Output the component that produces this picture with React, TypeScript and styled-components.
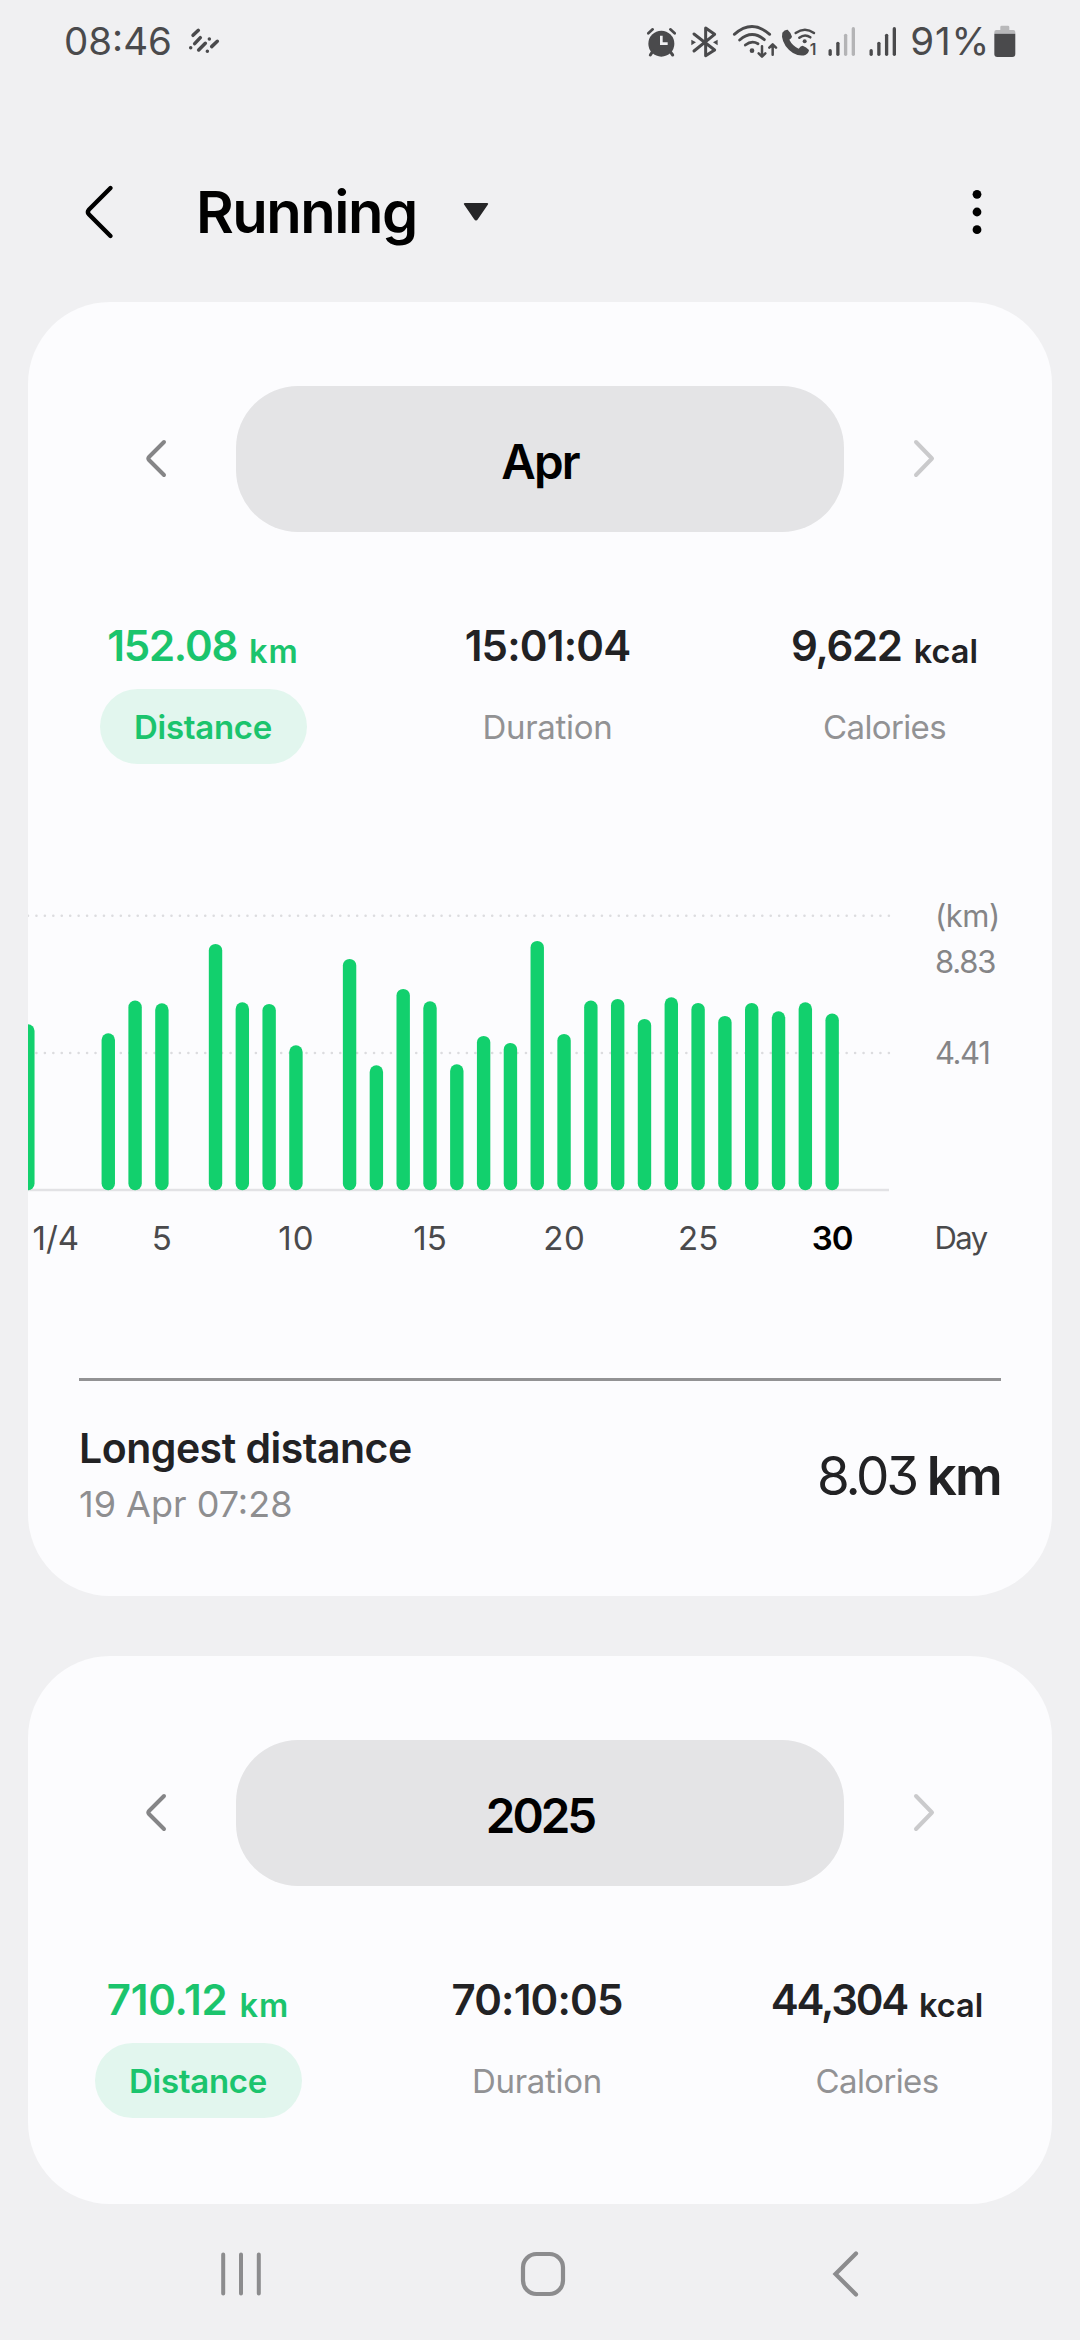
import React from 'react';
import styled, { createGlobalStyle } from 'styled-components';

const ink = '#4a4a4c';
const green = '#1bc46d';

const GlobalStyle = createGlobalStyle`
  * { box-sizing: border-box; }
  body {
    margin: 0;
    background: #f0f0f2;
    font-family: Inter, Roboto, "Liberation Sans", sans-serif;
    color: #000;
  }
`;

const Screen = styled.div`
  display: flex;
  flex-direction: column;
  width: 1080px;
  height: 2340px;
  overflow: hidden;
  background: #f0f0f2;
`;

/* ---------- status bar ---------- */

const StatusBar = styled.div`
  display: flex;
  align-items: center;
  height: 82px;
  padding: 0 64px;
  color: ${ink};
`;

const Clock = styled.span`
  width: 124px;
  font-size: 38.5px;
  line-height: 82px;
  white-space: nowrap;
`;

const StatusIcons = styled.div`
  display: flex;
  align-items: center;
  margin-left: auto;
`;

const StatusGlyph = styled.svg<{ $gap?: number }>`
  display: block;
  flex: none;
  height: 34px;
  margin-left: ${p => p.$gap ?? 0}px;
`;

const BatteryLevel = styled.span`
  width: 82.4px;
  margin-left: 13px;
  font-size: 38.5px;
  line-height: 82px;
  letter-spacing: 0.8px;
  white-space: nowrap;
`;

function SignalBars({ left, strong, gap }: { left: number; strong: boolean; gap: number }) {
  const tops = [152, 130, 106, 86];
  return (
    <StatusGlyph $gap={gap} width={29.3} viewBox={`${left} 72 88 102`}>
      {tops.map((top, i) => (
        <path
          key={top}
          d={`M${left + 9.5 + i * 23.2} ${top}V163`}
          stroke={strong || i < 2 ? ink : '#b4b4b6'}
          strokeWidth="10"
          strokeLinecap="round"
        />
      ))}
    </StatusGlyph>
  );
}

function Status() {
  return (
    <StatusBar>
      <Clock>08:46</Clock>
      <svg width="32" height="27.3" viewBox="24 22 96 82" stroke={ink} strokeWidth="10.5" strokeLinecap="round">
        <path d="M39 47L55 32M44 72L61 54M56 91L76 71M95 81L112 65M32 84h.1M88 58h.1M82 95h.1" />
      </svg>
      <StatusIcons>
        <StatusGlyph width={30.7} viewBox="78 72 92 102">
          <circle cx="124" cy="131" r="39" fill={ink} />
          <path d="M124 107V131H143" fill="none" stroke="#f0f0f2" strokeWidth="8" />
          <path d="M85 100L98 88M151 88L164 100" stroke={ink} strokeWidth="8" strokeLinecap="round" />
          <path d="M98 154L91 165M150 154L158 165" stroke={ink} strokeWidth="9" strokeLinecap="round" />
        </StatusGlyph>
        <StatusGlyph $gap={14} width={29.3} viewBox="212 72 88 102">
          <path
            d="M224 102L286 150L259 167V84L286 103L224 153"
            fill="none"
            stroke={ink}
            strokeWidth="9"
            strokeLinecap="round"
            strokeLinejoin="round"
          />
          <path d="M216 119L230 127L216 136ZM295 119L281 127L295 136Z" fill={ink} />
        </StatusGlyph>
        <StatusGlyph $gap={12} width={46} viewBox="336 72 138 102">
          <g fill="none" stroke={ink} strokeWidth="8.5" strokeLinecap="round">
            <path d="M343 103Q396 56 449 103" />
            <path d="M359 120Q396 88 433 119" />
            <path d="M376 135Q395 120 414 131" />
          </g>
          <circle cx="396" cy="152" r="7" fill={ink} />
          <path
            d="M426 139V169M416 160L426 170L436 160M458 164V134M448 143L458 133L468 143"
            fill="none"
            stroke={ink}
            strokeWidth="7.5"
            strokeLinecap="round"
            strokeLinejoin="round"
          />
        </StatusGlyph>
        <StatusGlyph $gap={3.3} width={38} viewBox="484 72 114 102">
          <path
            d="M488 98Q495 88 504 89Q515 99 517 110Q516 115 509 119Q518 137 537 146Q543 137 549 137Q560 141 568 150Q567 160 557 165Q540 170 520 159Q491 139 487 110Z"
            fill={ink}
          />
          <g fill="none" stroke={ink} strokeWidth="7.5" strokeLinecap="round">
            <path d="M528 99Q556 79 583 99" />
            <path d="M539 113Q556 100 572 112" />
          </g>
          <circle cx="555" cy="124" r="6" fill={ink} />
          <text x="570" y="166" fontSize="47" fontWeight="600" fill={ink}>1</text>
        </StatusGlyph>
        <SignalBars left={620} strong={false} gap={7.7} />
        <SignalBars left={743} strong gap={12} />
        <BatteryLevel>91%</BatteryLevel>
        <StatusGlyph width={23.3} viewBox="1118 72 70 102">
          <path
            d="M1122 101V96Q1122 90 1128 90H1140V81Q1140 77 1144 77H1163Q1167 77 1167 81V90H1179Q1185 90 1185 96V101Z"
            fill="#b8b8ba"
          />
          <path d="M1122 101H1185V162Q1185 171 1176 171H1131Q1122 171 1122 162Z" fill={ink} />
        </StatusGlyph>
      </StatusIcons>
    </StatusBar>
  );
}

/* ---------- header ---------- */

const Header = styled.header`
  display: flex;
  align-items: center;
  height: 220px;
  padding: 40px 94px 0 84px;
`;

const Title = styled.h1`
  width: 267px;
  margin: 0 0 0 80px;
  font-size: 58px;
  font-weight: 600;
  line-height: 82px;
  letter-spacing: -1.5px;
`;

const MoreIcon = styled.svg`
  margin-left: auto;
`;

/* ---------- cards ---------- */

const Cards = styled.main`
  display: flex;
  flex-direction: column;
  gap: 60px;
  padding: 0 28px;
`;

const Card = styled.section<{ $height: number }>`
  display: flex;
  flex-direction: column;
  height: ${p => p.$height}px;
  padding-top: 84px;
  border-radius: 82px;
  background: #fcfcfe;
  overflow: hidden;
`;

const PeriodRow = styled.div`
  display: flex;
  justify-content: center;
  align-items: center;
  gap: 64px;
`;

const PeriodPill = styled.div<{ $spacing: number }>`
  width: 608px;
  height: 146px;
  padding-top: 5px;
  border-radius: 62px;
  background: #e4e4e6;
  font-size: 47.5px;
  font-weight: 600;
  line-height: 142px;
  letter-spacing: ${p => p.$spacing}px;
  text-align: center;
`;

function Chevron({ flip, color }: { flip?: boolean; color: string }) {
  return (
    <svg width="32" height="44" viewBox="0 0 32 44" fill="none" stroke={color} strokeWidth="4" strokeLinecap="round" strokeLinejoin="round">
      <path d={flip ? 'M8 5L24 21.5L8 38' : 'M24 5L9 20Q7.5 21.5 9 23L24 38'} />
    </svg>
  );
}

const Stats = styled.div<{ $columns: string }>`
  display: grid;
  grid-template-columns: ${p => p.$columns};
  margin-top: 88px;
`;

const Stat = styled.div`
  display: flex;
  flex-direction: column;
  align-items: center;
`;

const StatValue = styled.div<{ $active?: boolean; $spacing: number }>`
  height: 52px;
  color: ${p => (p.$active ? green : '#222224')};
  font-size: 42px;
  font-weight: 600;
  line-height: 52px;
  letter-spacing: ${p => p.$spacing}px;
  white-space: nowrap;
`;

const Unit = styled.span<{ $spacing?: number }>`
  margin-left: 12px;
  font-size: 32.5px;
  line-height: 0;
  letter-spacing: ${p => p.$spacing ?? 0}px;
  vertical-align: -2px;
`;

const StatLabel = styled.div<{ $active?: boolean; $spacing?: number }>`
  display: flex;
  justify-content: center;
  height: 75px;
  width: 207px;
  margin-top: 17px;
  border-radius: 38px;
  background: ${p => (p.$active ? '#e2f6ee' : 'transparent')};
  color: ${p => (p.$active ? green : '#929294')};
  font-size: 33px;
  font-weight: ${p => (p.$active ? 600 : 400)};
  line-height: 76px;
  letter-spacing: ${p => p.$spacing ?? -0.3}px;
`;

interface StatItem {
  label: string;
  value: string;
  spacing: number;
  unit?: string;
  unitSpacing?: number;
  labelSpacing?: number;
}

function PeriodSummary({ period, spacing, columns, stats }: { period: string; spacing: number; columns: string; stats: StatItem[] }) {
  return (
    <>
      <PeriodRow>
        <Chevron color="#858587" />
        <PeriodPill $spacing={spacing}>{period}</PeriodPill>
        <Chevron flip color="#cacacc" />
      </PeriodRow>
      <Stats $columns={columns}>
        {stats.map((s, i) => (
          <Stat key={s.label}>
            <StatValue $active={i === 0} $spacing={s.spacing}>
              {s.value}
              {s.unit && <Unit $spacing={s.unitSpacing}>{s.unit}</Unit>}
            </StatValue>
            <StatLabel $active={i === 0} $spacing={s.labelSpacing}>{s.label}</StatLabel>
          </Stat>
        ))}
      </Stats>
    </>
  );
}

/* ---------- chart ---------- */

const ChartSvg = styled.svg`
  display: block;
  flex: none;
  margin-top: 116px;
`;

const AxisText = styled.text<{ $bold?: boolean; $spacing?: number }>`
  fill: ${p => (p.$bold ? '#000' : ink)};
  font-size: 33px;
  font-weight: ${p => (p.$bold ? 600 : 400)};
  letter-spacing: ${p => p.$spacing ?? 0}px;
  text-anchor: middle;
`;

const ScaleText = styled.text<{ $dark?: boolean; $spacing: number }>`
  fill: ${p => (p.$dark ? ink : '#858587')};
  font-size: 31px;
  letter-spacing: ${p => p.$spacing}px;
`;

/* [day, height of the bar] */
const bars: [number, number][] = [
  [0, 166], [3, 157], [4, 189.7], [5, 187], [7, 246.3], [8, 188], [9, 186.3], [10, 145],
  [12, 231.3], [13, 125], [14, 201.3], [15, 189], [16, 126], [17, 154.3], [18, 147.3],
  [19, 249.3], [20, 156.3], [21, 189.7], [22, 191.3], [23, 171.3], [24, 193], [25, 187.3],
  [26, 174.3], [27, 187.3], [28, 179], [29, 188], [30, 176.7],
];
const dayX = (day: number) => 133.9 + (day - 5) * 26.81;

function Chart() {
  return (
    <ChartSvg width="1024" height="400" viewBox="0 0 1024 400">
      <g stroke="#dcdcdf" strokeWidth="2.6" strokeLinecap="round" strokeDasharray="0 8.44">
        <path d="M0 35.7H863" />
        <path d="M0 173H863" />
      </g>
      <path d="M0 310H861" stroke="#e2e2e5" strokeWidth="2.4" />
      {bars.map(([day, h]) => (
        <rect key={day} x={dayX(day) - 6.7} y={310.2 - h} width="13.4" height={h} rx="6.7" fill="#12d06d" />
      ))}
      <AxisText x={dayX(1) + 1.2} y="370">1/4</AxisText>
      <AxisText x={dayX(5)} y="370">5</AxisText>
      <AxisText x={dayX(10) + 0.6} y="370" $spacing={1.2}>10</AxisText>
      <AxisText x={dayX(15)} y="370">15</AxisText>
      <AxisText x={dayX(20) + 0.4} y="370" $spacing={0.6}>20</AxisText>
      <AxisText x={dayX(25)} y="370">25</AxisText>
      <AxisText x={dayX(30)} y="370" $bold $spacing={-1}>30</AxisText>
      <ScaleText x="907" y="46.8" $spacing={-0.5}>(km)</ScaleText>
      <ScaleText x="907" y="93.2" $spacing={-1.2}>8.83</ScaleText>
      <ScaleText x="907" y="184.2" $spacing={-1.4}>4.41</ScaleText>
      <ScaleText x="906.5" y="369" $dark $spacing={-1.5}>Day</ScaleText>
    </ChartSvg>
  );
}

/* ---------- record ---------- */

const Record = styled.div`
  display: flex;
  justify-content: space-between;
  align-items: center;
  margin: 98px 51px 0;
  padding-top: 39px;
  border-top: 3px solid #929294;
`;

const RecordTitle = styled.div`
  color: #222224;
  font-size: 41px;
  font-weight: 600;
  line-height: 56px;
  letter-spacing: -0.5px;
`;

const RecordDate = styled.div`
  color: #8e8e90;
  font-size: 36px;
  line-height: 56px;
`;

const RecordValue = styled.div`
  color: #222224;
  font-size: 53px;
  line-height: 110px;
  letter-spacing: -3.3px;
  font-feature-settings: 'cv09';
`;

const RecordUnit = styled.span`
  margin-left: 11px;
  font-weight: 600;
  letter-spacing: -1.8px;
`;

/* ---------- navigation bar ---------- */

const NavBar = styled.nav`
  display: grid;
  grid-template-columns: repeat(3, 302px);
  justify-items: center;
  align-items: center;
  flex: 1;
  padding: 4px 84px 0 90px;
`;

export default function App() {
  return (
    <Screen>
      <GlobalStyle />
      <Status />
      <Header>
        <svg width="32" height="56" viewBox="0 0 32 56" fill="none" stroke="#000" strokeWidth="4.4" strokeLinecap="round" strokeLinejoin="round">
          <path d="M26.5 4L4.8 25.8Q3 28 4.8 30.2L26.5 52" />
        </svg>
        <Title>Running</Title>
        <svg width="26" height="20" viewBox="0 0 26 20">
          <path d="M2 1H24Q26 1 24.6 3L15 17Q13 20 11 17L1.4 3Q0 1 2 1Z" fill="#252527" />
        </svg>
        <MoreIcon width="18" height="48" viewBox="0 0 18 48">
          <circle cx="9" cy="6.3" r="4.4" />
          <circle cx="9" cy="24" r="4.4" />
          <circle cx="9" cy="41.7" r="4.4" />
        </MoreIcon>
      </Header>
      <Cards>
        <Card $height={1294}>
          <PeriodSummary
            period="Apr"
            spacing={-1.8}
            columns="350px 339px 335px"
            stats={[
              { label: 'Distance', value: '152.08', spacing: -1.2, unit: 'km', unitSpacing: 1 },
              { label: 'Duration', value: '15:01:04', spacing: -0.8 },
              { label: 'Calories', value: '9,622', spacing: -1.3, unit: 'kcal', labelSpacing: -0.65 },
            ]}
          />
          <Chart />
          <Record>
            <div>
              <RecordTitle>Longest distance</RecordTitle>
              <RecordDate>19 Apr 07:28</RecordDate>
            </div>
            <RecordValue>
              8.03<RecordUnit>km</RecordUnit>
            </RecordValue>
          </Record>
        </Card>
        <Card $height={548}>
          <PeriodSummary
            period="2025"
            spacing={-3}
            columns="340px 338px 342px"
            stats={[
              { label: 'Distance', value: '710.12', spacing: -0.2, unit: 'km', unitSpacing: 1 },
              { label: 'Duration', value: '70:10:05', spacing: -0.8 },
              { label: 'Calories', value: '44,304', spacing: -2.2, unit: 'kcal', labelSpacing: -0.65 },
            ]}
          />
        </Card>
      </Cards>
      <NavBar>
        <svg width="42" height="46" viewBox="0 0 42 46" stroke="#8c8c8e" strokeWidth="4" strokeLinecap="round">
          <path d="M3.2 3.5V42.5M21 3.5V42.5M38.8 3.5V42.5" />
        </svg>
        <svg width="46" height="46" viewBox="0 0 46 46" fill="none" stroke="#8c8c8e" strokeWidth="4.2">
          <rect x="3" y="3" width="40" height="40" rx="13.5" />
        </svg>
        <svg width="30" height="48" viewBox="0 0 30 48" fill="none" stroke="#8c8c8e" strokeWidth="4.2" strokeLinecap="round" strokeLinejoin="miter">
          <path d="M26 3.5L5.5 24L26 44.5" />
        </svg>
      </NavBar>
    </Screen>
  );
}
